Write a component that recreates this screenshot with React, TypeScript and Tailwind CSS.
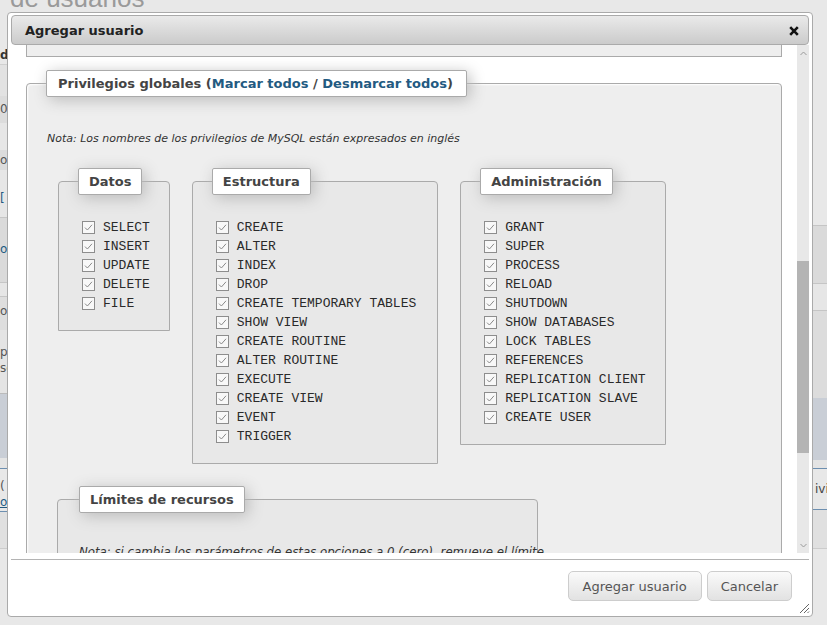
import React from "react";

function Check() {
  return (
    <svg width="13" height="13" viewBox="0 0 13 13" className="shrink-0">
      <rect x="0.5" y="0.5" width="12" height="12" fill="#f8f8f8" stroke="#8d8d8d" />
      <path d="M3 6.6 L5.4 9 L10 3.8" fill="none" stroke="#8a8a8a" strokeWidth="1" />
    </svg>
  );
}

function Priv({ name }: { name: string }) {
  return (
    <div className="flex h-[19px] items-center gap-[8px]">
      <Check />
      <span className="font-['Liberation_Mono',monospace] text-[13px] leading-[19px] text-[#2a2a2a] whitespace-pre">
        {name}
      </span>
    </div>
  );
}

function Legend({ children }: { children: React.ReactNode }) {
  return (
    <div className="-mt-[14px] -ml-[4px] flex w-fit h-[27px] items-center pt-[1px] px-[10px] bg-white border border-[#aaa] rounded-[2px] shadow-[3px_3px_15px_#bbb] text-[13px] font-bold text-[#444] whitespace-nowrap">
      {children}
    </div>
  );
}

function SubSet({ title, items, pr }: { title: string; items: string[]; pr: string }) {
  return (
    <div className={"border border-[#aaa] rounded-t-[4px] bg-[#e8e8e8] pl-[23px] pb-[17px] " + pr}>
      <Legend>{title}</Legend>
      <div className="mt-[23px] flex flex-col">
        {items.map((n) => (
          <Priv key={n} name={n} />
        ))}
      </div>
    </div>
  );
}

const datos = ["SELECT", "INSERT", "UPDATE", "DELETE", "FILE"];
const estructura = [
  "CREATE",
  "ALTER",
  "INDEX",
  "DROP",
  "CREATE TEMPORARY TABLES",
  "SHOW VIEW",
  "CREATE ROUTINE",
  "ALTER ROUTINE",
  "EXECUTE",
  "CREATE VIEW",
  "EVENT",
  "TRIGGER",
];
const admin = [
  "GRANT",
  "SUPER",
  "PROCESS",
  "RELOAD",
  "SHUTDOWN",
  "SHOW DATABASES",
  "LOCK TABLES",
  "REFERENCES",
  "REPLICATION CLIENT",
  "REPLICATION SLAVE",
  "CREATE USER",
];

function Dialog() {
  return (
    <div className="absolute left-[7px] top-[12px] w-[806px] h-[605px] bg-white border border-[#aaa] rounded-[4px] pt-[2px] px-[3px] pb-[3px] flex flex-col">
      {/* title bar */}
      <div className="h-[30px] shrink-0 border border-[#aaa] rounded-[4px] bg-gradient-to-b from-[#eaeaea] to-[#cbcbcb] flex items-center justify-between pt-[1px] pl-[13px] pr-[9px]">
        <span className="text-[13px] font-bold text-[#222]">Agregar usuario</span>
        <svg width="10" height="10" viewBox="0 0 10 10">
          <path d="M1.2 1.2 L8.8 8.8 M8.8 1.2 L1.2 8.8" stroke="#111" strokeWidth="2.6" />
        </svg>
      </div>

      {/* content */}
      <div className="h-[508px] shrink-0 flex">
        <div className="flex-1 overflow-hidden">
          <div className="mx-[15px] h-[12px] border-x border-b border-[#aaa] bg-[#eee]" />

          <div className="mx-[15px] mt-[26px] border border-[#aaa] rounded-t-[4px] bg-[#eee] shadow-[inset_1px_1px_2px_#fff] px-[20px] pb-[40px]">
            <div className="-mt-[14px] -ml-[1px] flex w-fit h-[27px] items-center pt-[1px] pl-[11px] pr-[13px] bg-white border border-[#aaa] rounded-[2px] shadow-[3px_3px_15px_#bbb] text-[13px] font-bold text-[#444] whitespace-pre">
              Privilegios globales (<span className="text-[#235a81]">Marcar todos</span> /{" "}
              <span className="text-[#235a81]">Desmarcar todos</span>)
            </div>

            <p className="mt-[34px] text-[11px] leading-[15px] italic text-[#333]">
              Nota: Los nombres de los privilegios de MySQL están expresados en inglés
            </p>

            <div className="mt-[35px] ml-[11px] flex items-start gap-[22px]">
              <SubSet title="Datos" items={datos} pr="pr-[19px]" />
              <SubSet title="Estructura" items={estructura} pr="pr-[21px]" />
              <SubSet title="Administración" items={admin} pr="pr-[19px]" />
            </div>

            <div className="mt-[35px] ml-[10px] w-[481px] border border-[#aaa] rounded-t-[4px] bg-[#e8e8e8] pl-[21px] pr-[20px] pb-[40px]">
              <div className="-mt-[14px] flex w-fit h-[27px] items-center pt-[1px] px-[10px] bg-white border border-[#aaa] rounded-[2px] shadow-[3px_3px_15px_#bbb] text-[13px] font-bold text-[#444] whitespace-nowrap">
                Límites de recursos
              </div>
              <p className="mt-[32px] text-[11.75px] leading-[15px] italic text-[#333] whitespace-nowrap">
                Nota: si cambia los parámetros de estas opciones a 0 (cero), remueve el límite.
              </p>
            </div>
          </div>
        </div>

        {/* scrollbar */}
        <div className="w-[12px] shrink-0 bg-[#e8e8e8] flex flex-col">
          <div className="h-[16px] flex items-center justify-center">
            <svg width="7" height="5" viewBox="0 0 7 5">
              <path d="M0.5 4 L3.5 1 L6.5 4" fill="none" stroke="#9a9a9a" strokeWidth="1" />
            </svg>
          </div>
          <div className="h-[200px]" />
          <div className="h-[192px] bg-[#b4b4b4]" />
          <div className="flex-1" />
          <div className="h-[16px] flex items-center justify-center">
            <svg width="7" height="5" viewBox="0 0 7 5">
              <path d="M0.5 1 L3.5 4 L6.5 1" fill="none" stroke="#9a9a9a" strokeWidth="1" />
            </svg>
          </div>
        </div>
      </div>

      {/* button pane */}
      <div className="mt-[6px] flex-1 border-t border-[#b3b3b3] flex justify-end items-start pt-[11px] pr-[17px] gap-[5px]">
        <button className="h-[30px] px-[14px] pt-[1px] border border-[#cdcdcd] rounded-[5px] bg-gradient-to-b from-[#fafafa] to-[#e2e2e2] text-[13px] text-[#555]">
          Agregar usuario
        </button>
        <button className="h-[30px] px-[13px] pt-[1px] border border-[#cdcdcd] rounded-[5px] bg-gradient-to-b from-[#fafafa] to-[#e2e2e2] text-[13px] text-[#555]">
          Cancelar
        </button>
      </div>

      {/* resize handle */}
      <svg className="absolute right-[2px] bottom-[2px]" width="12" height="12" viewBox="0 0 12 12">
        <path d="M11 2 L2 11 M11 6 L6 11 M11 9.5 L9.5 11" stroke="#666" strokeWidth="1" />
      </svg>
    </div>
  );
}

export default function App() {
  return (
    <div className="relative w-[827px] h-[625px] overflow-hidden bg-[#e8e8e8] font-['DejaVu_Sans',sans-serif]">
      <div className="-mt-[17px] pl-[10px] text-[26px] leading-[30px] text-[#9a9a9a] font-['Liberation_Sans',sans-serif]">
        de usuarios
      </div>

      <div className="flex justify-between">
        {/* left strip of the page behind */}
        <div className="w-[7px] flex flex-col overflow-hidden text-[12px] whitespace-nowrap">
          <div className="h-[33px] bg-[#e8e8e8]" />
          <div className="h-[18px] bg-[#e8e8e8] font-bold text-[#333] leading-[18px]">do</div>
          <div className="h-[32px] bg-[#e2e2e2] border-t border-[#d0d0d0]" />
          <div className="h-[27px] bg-[#dcdcdc] text-[#555] leading-[27px]">0</div>
          <div className="h-[27px] bg-[#e6e6e6]" />
          <div className="h-[20px] bg-[#dcdcdc] text-[#555] leading-[20px]">os</div>
          <div className="h-[47px] bg-[#e6e6e6] text-[#235a81] pt-[20px] leading-[16px]">[</div>
          <div className="h-[65px] bg-[#dadada] border-t border-[#c6c6c6] text-[#235a81] leading-[63px]">o</div>
          <div className="h-[14px] bg-[#e6e6e6] border-t border-[#c6c6c6]" />
          <div className="h-[34px] bg-[#dedede] border-t border-[#c6c6c6] text-[#555] leading-[28px]">os</div>
          <div className="h-[63px] bg-[#e4e4e4] text-[#555] pt-[14px] leading-[16px]">
            <div>p</div>
            <div>se</div>
          </div>
          <div className="h-[65px] bg-[#c9ced6] border-t border-[#bbb]" />
          <div className="h-[10px] bg-[#e4e4e4]" />
          <div className="h-[44px] bg-[#e8e8e8] border-y border-[#6d8fb0] text-[#555] pt-[9px] leading-[16px]">
            <div>(</div>
            <div className="text-[#235a81] underline">os</div>
          </div>
          <div className="h-[36px] bg-[#e0e0e0]" />
          <div className="h-[80px] bg-[#e8e8e8] border-t border-[#ccc]" />
        </div>

        {/* right strip of the page behind */}
        <div className="w-[14px] flex flex-col overflow-hidden text-[12px] whitespace-nowrap">
          <div className="h-[212px] bg-[#e8e8e8]" />
          <div className="h-[58px] bg-[#dadada] border-t border-[#c5c5c5]" />
          <div className="h-[27px] bg-[#e6e6e6] border-t border-[#c5c5c5]" />
          <div className="h-[88px] bg-[#dcdcdc] border-t border-[#c5c5c5]" />
          <div className="h-[62px] bg-[#c9ced6]" />
          <div className="h-[8px] bg-[#e4e4e4]" />
          <div className="h-[42px] bg-[#e8e8e8] border-y border-[#6d8fb0] text-[#444] pl-[2px] leading-[40px]">ivi</div>
          <div className="h-[38px] bg-[#e0e0e0]" />
          <div className="h-[80px] bg-[#e8e8e8] border-t border-[#ccc]" />
        </div>
      </div>

      <Dialog />
    </div>
  );
}
